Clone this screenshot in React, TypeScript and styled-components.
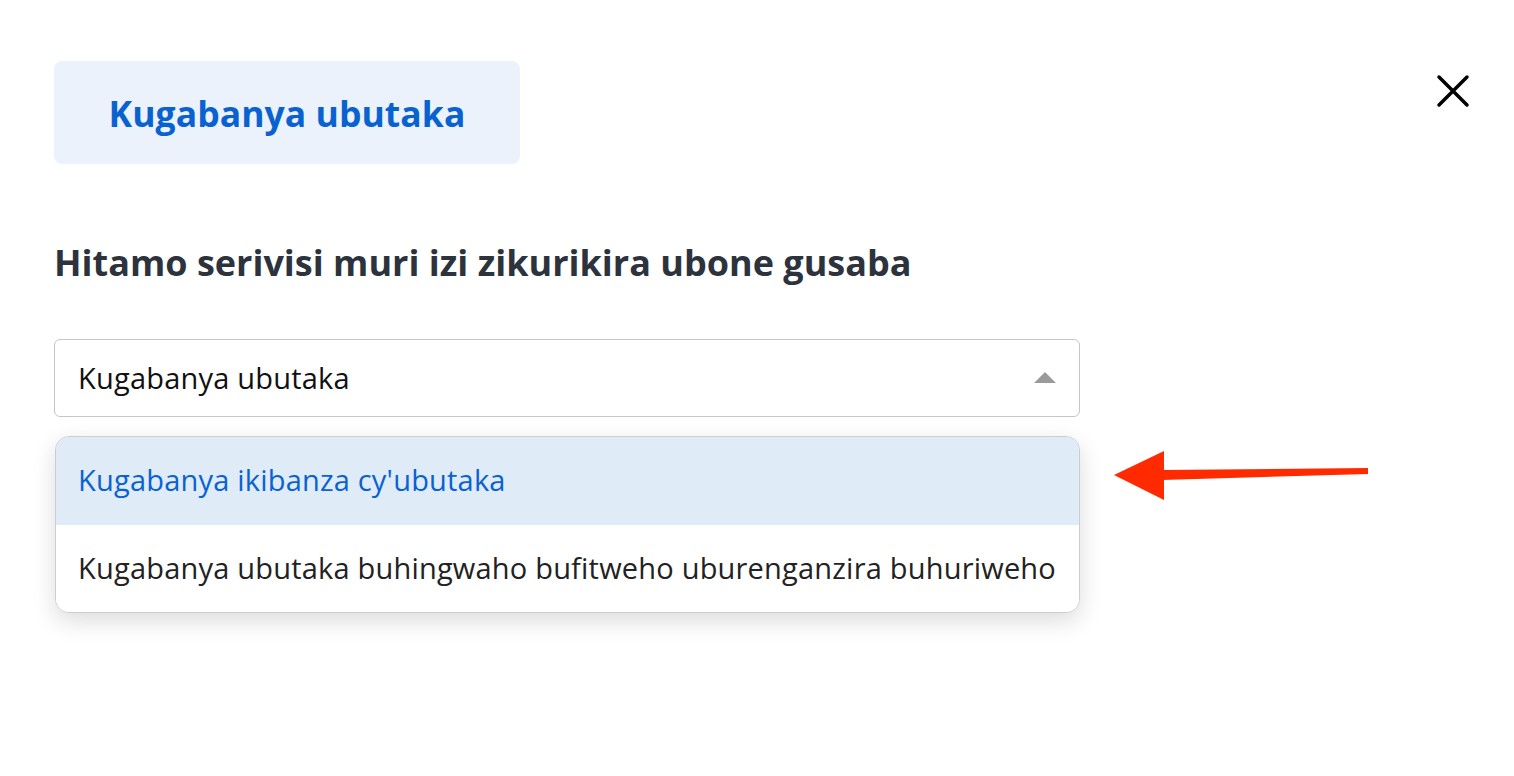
import React from "react";
import styled, { createGlobalStyle } from "styled-components";

const Global = createGlobalStyle`
  html, body { margin: 0; padding: 0; background: #ffffff; }
  body { font-family: "Open Sans", "Noto Sans", sans-serif; }
  * { box-sizing: border-box; }
`;

const Page = styled.div`
  width: 1514px;
  height: 776px;
  padding: 61px 44px 0 54px;
  overflow: hidden;
`;

const Header = styled.div`
  display: flex;
  justify-content: space-between;
  align-items: flex-start;
`;

const TitleBox = styled.div`
  width: 466px;
  height: 103px;
  background: #ebf2fc;
  border-radius: 8px;
  display: flex;
  align-items: center;
  justify-content: center;
  color: #0a62d0;
  font-weight: 700;
  font-size: 35.5px;
  letter-spacing: 0.05px;
`;

const CloseButton = styled.button`
  margin-top: 13px;
  width: 34px;
  height: 34px;
  padding: 0;
  border: none;
  background: none;
  display: flex;
  align-items: center;
  justify-content: center;
  cursor: pointer;
`;

const Heading = styled.h2`
  margin: 77px 0 0 0;
  font-size: 36px;
  line-height: 44px;
  font-weight: 700;
  color: #2d333d;
`;

const SelectWrap = styled.div`
  position: relative;
  width: 1026px;
  margin-top: 54px;
`;

const SelectBox = styled.div`
  height: 78px;
  border: 1.5px solid #c6c6c6;
  border-radius: 6px;
  display: flex;
  align-items: center;
  justify-content: space-between;
  padding: 0 23px 2px 23px;
  font-size: 29px;
  letter-spacing: 0.2px;
  color: #111111;
`;

const Caret = styled.span`
  width: 0;
  height: 0;
  border-left: 11px solid transparent;
  border-right: 11px solid transparent;
  border-bottom: 11px solid #9b9b9b;
`;

const Menu = styled.div`
  position: absolute;
  top: 97px;
  left: 1px;
  right: 0;
  background: #ffffff;
  border: 1.5px solid #cdcdcd;
  border-radius: 14px;
  overflow: hidden;
  box-shadow: 0 8px 24px rgba(0, 0, 0, 0.14);
`;

const Option = styled.div<{ $active?: boolean }>`
  height: ${(p) => (p.$active ? 88 : 87)}px;
  display: flex;
  align-items: center;
  padding: 0 0 3px 22px;
  font-size: 29px;
  letter-spacing: 0.2px;
  background: ${(p) => (p.$active ? "#dfecf8" : "#ffffff")};
  color: ${(p) => (p.$active ? "#0a62d0" : "#222222")};
`;

const Pointer = styled.svg`
  position: absolute;
  left: 1060px;
  top: 112px;
`;

export default function App() {
  return (
    <>
      <Global />
      <Page>
        <Header>
          <TitleBox>Kugabanya ubutaka</TitleBox>
          <CloseButton aria-label="Close">
            <svg width="34" height="34" viewBox="0 0 34 34">
              <path d="M3 3 L31 31 M31 3 L3 31" stroke="#000" strokeWidth="3.5" strokeLinecap="round" />
            </svg>
          </CloseButton>
        </Header>
        <Heading>Hitamo serivisi muri izi zikurikira ubone gusaba</Heading>
        <SelectWrap>
          <SelectBox>
            <span>Kugabanya ubutaka</span>
            <Caret />
          </SelectBox>
          <Menu>
            <Option $active>Kugabanya ikibanza cy'ubutaka</Option>
            <Option>Kugabanya ubutaka buhingwaho bufitweho uburenganzira buhuriweho</Option>
          </Menu>
          <Pointer width="260" height="54" viewBox="0 0 260 54">
            <polygon points="0,24 50,0 50,49" fill="#ff2a00" />
            <polygon points="48,19 254,17 254,23 48,29" fill="#ff2a00" />
          </Pointer>
        </SelectWrap>
      </Page>
    </>
  );
}
